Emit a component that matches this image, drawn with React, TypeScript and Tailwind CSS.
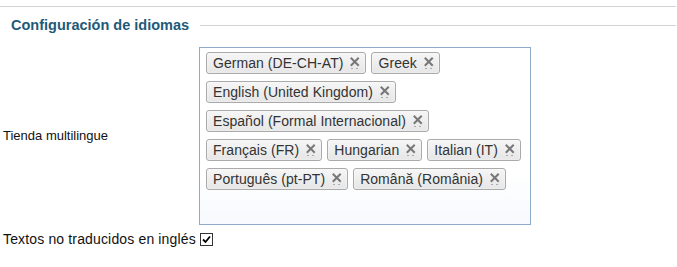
import React from 'react';

const rows: string[][] = [
  ['German (DE-CH-AT)', 'Greek'],
  ['English (United Kingdom)'],
  ['Español (Formal Internacional)'],
  ['Français (FR)', 'Hungarian', 'Italian (IT)'],
  ['Português (pt-PT)', 'Română (România)'],
];

const CloseIcon: React.FC = () => (
  <svg width="10" height="14" viewBox="0 0 10 14" className="ml-[7px] shrink-0">
    <path d="M1.5 2.5 L8 9 M8 2.5 L1.5 9" stroke="#777" strokeWidth="2" strokeLinecap="square" />
    <rect x="1" y="12" width="2" height="1" fill="#aaa" />
    <rect x="6" y="12" width="2" height="1" fill="#aaa" />
  </svg>
);

const Tag: React.FC<{ label: string }> = ({ label }) => (
  <span className="flex items-center h-[22px] pl-[6px] pr-[5px] border border-[#aaaaaa] rounded-[3px] bg-gradient-to-b from-[#f6f6f6] to-[#e6e6e6] text-[14px] leading-[16px] tracking-[0.05px] text-[#333] whitespace-nowrap shadow-[inset_0_0_2px_#fff]">
    {label}
    <CloseIcon />
  </span>
);

const App: React.FC = () => {
  return (
    <div className="w-[677px] h-[267px] bg-white font-['Liberation_Sans',Arial,sans-serif] text-[#111]">
      <div className="pt-[6px] pr-[1px]">
        <div className="h-px bg-[#d3d3d3]" />
      </div>

      <div className="flex items-center mt-[10px] h-[17px] pr-[1px]">
        <h2 className="pl-[11px] text-[14.5px] leading-[17px] font-bold text-[#1e5a78]">Configuración de idiomas</h2>
        <div className="flex-1 h-px bg-[#d3d3d3] ml-[11px]" />
      </div>

      <div className="flex items-center mt-[13px]">
        <label className="w-[199px] pl-[3px] text-[13px] leading-[16px]">Tienda multilingue</label>
        <div className="w-[332px] h-[178px] border border-[#8eabc9] bg-gradient-to-b from-white from-70% to-[#f6f9fd] pt-[4px] pl-[6px] pr-[4px] flex flex-col gap-[7px]">
          {rows.map((row, i) => (
            <div key={i} className="flex gap-[5px]">
              {row.map((lang) => (
                <Tag key={lang} label={lang} />
              ))}
            </div>
          ))}
        </div>
      </div>

      <div className="flex items-center mt-[6px] pl-[3px] text-[14px] leading-[16px] tracking-[0.15px]">
        <span>Textos no traducidos en inglés</span>
        <span className="ml-[4px] w-[13px] h-[13px] border border-[#333] bg-white flex items-center justify-center">
          <svg width="9" height="9" viewBox="0 0 9 9">
            <path d="M1 4.5 L3.5 7 L8 1.5" stroke="#000" strokeWidth="1.8" fill="none" />
          </svg>
        </span>
      </div>
    </div>
  );
};

export default App;
